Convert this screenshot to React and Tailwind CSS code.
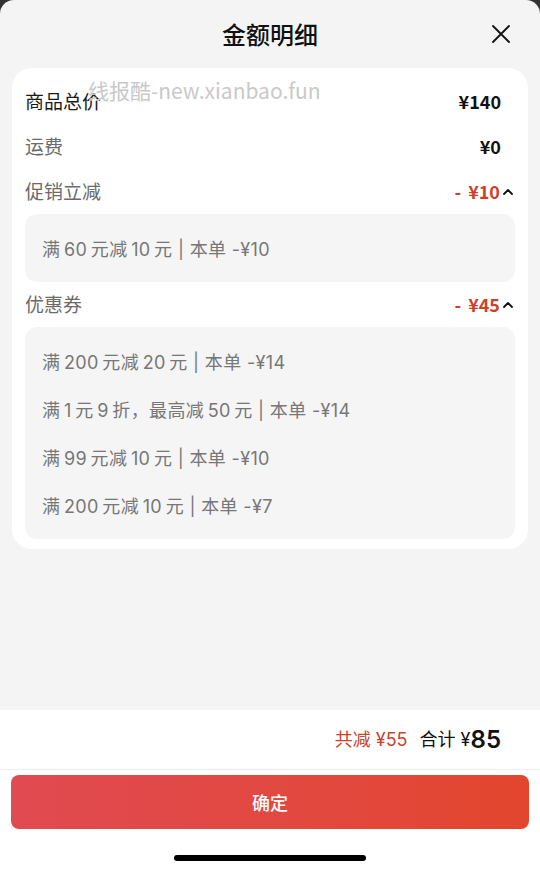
import React from "react";

const font = { fontFamily: '"Noto Sans CJK SC", "Noto Sans", sans-serif' };
const mixed = { fontFamily: 'Inter, "Noto Sans CJK SC", sans-serif' };
const t = "\u2009";

function Caret() {
  return (
    <svg width="14" height="10" viewBox="0 0 14 10" className="ml-[1px]">
      <path d="M3 7 L7 3 L11 7" fill="none" stroke="#111" strokeWidth="1.8" strokeLinecap="round" strokeLinejoin="round" />
    </svg>
  );
}

function Row({ label, value, dark, red, caret }) {
  return (
    <div className="flex h-[45px] items-center justify-between pl-[13px] pr-[13px]">
      <span className={`text-[19px] ${dark ? "text-[#1a1a1a]" : "text-[#6b6b6b]"}`}>{label}</span>
      <div className="flex items-center">
        {red ? (
          <span className="flex items-center text-[18px] font-semibold text-[#cf3f2c]">
            <span>-</span>
            <span className="ml-[7px]">{value}</span>
          </span>
        ) : (
          <span className="text-[18px] font-semibold text-[#111]">{value}</span>
        )}
        {caret ? <Caret /> : <span className="w-[14px]" />}
      </div>
    </div>
  );
}

function Box({ items }) {
  return (
    <div className="mx-[13px] rounded-[12px] bg-[#f5f5f5] py-[10px] pl-[17px]">
      {items.map((s, i) => (
        <div key={i} className="flex h-[48px] items-center pt-[3px] text-[18px] tracking-[0.35px] text-[#777]" style={mixed}>
          {s}
        </div>
      ))}
    </div>
  );
}

export default function App() {
  return (
    <div className="relative flex h-[876px] w-[540px] flex-col overflow-hidden bg-[#333]" style={font}>
      <div className="flex flex-1 flex-col rounded-t-[14px] bg-[#f4f4f4]">
        <div className="relative flex h-[68px] items-center justify-center">
          <span className="text-[24px] font-medium text-[#111]">金额明细</span>
          <svg className="absolute right-[29px] top-[24px]" width="20" height="20" viewBox="0 0 20 20">
            <path d="M2 2 L18 18 M18 2 L2 18" stroke="#111" strokeWidth="1.8" strokeLinecap="round" />
          </svg>
        </div>
        <div className="relative mx-[12px] rounded-[20px] bg-white pt-[11px] pb-[10px]">
          <Row label="商品总价" value="¥140" dark />
          <Row label="运费" value="¥0" />
          <Row label="促销立减" value="¥10" red caret />
          <Box items={[`满${t}60${t}元减${t}10${t}元 | 本单 -¥10`]} />
          <Row label="优惠券" value="¥45" red caret />
          <Box
            items={[
              `满${t}200${t}元减${t}20${t}元 | 本单 -¥14`,
              `满${t}1${t}元${t}9${t}折，最高减${t}50${t}元 | 本单 -¥14`,
              `满${t}99${t}元减${t}10${t}元 | 本单 -¥10`,
              `满${t}200${t}元减${t}10${t}元 | 本单 -¥7`,
            ]}
          />
          <div className="pointer-events-none absolute left-[76px] top-[7px] text-[21px] text-[#c9c9c9]">
            线报酷-new.xianbao.fun
          </div>
        </div>
        <div className="flex-1" />
        <div className="bg-white">
          <div className="flex h-[60px] items-center justify-end border-b border-[#eeeeee] pr-[39px]" style={mixed}>
            <span className="text-[18px] text-[#c9432f]">共减 ¥55</span>
            <span className="ml-[12px] text-[18px] text-[#111]">合计 ¥</span>
            <span className="text-[24px] font-semibold leading-none text-[#111]">85</span>
          </div>
          <div className="px-[11px] pt-[5px]">
            <div className="flex h-[54px] items-center justify-center rounded-[8px] bg-gradient-to-r from-[#e14a51] to-[#e2462d] text-[18px] font-medium text-white">
              确定
            </div>
          </div>
          <div className="flex h-[47px] items-center justify-center pt-[10px]">
            <div className="h-[6px] w-[192px] rounded-full bg-black" />
          </div>
        </div>
      </div>
    </div>
  );
}
